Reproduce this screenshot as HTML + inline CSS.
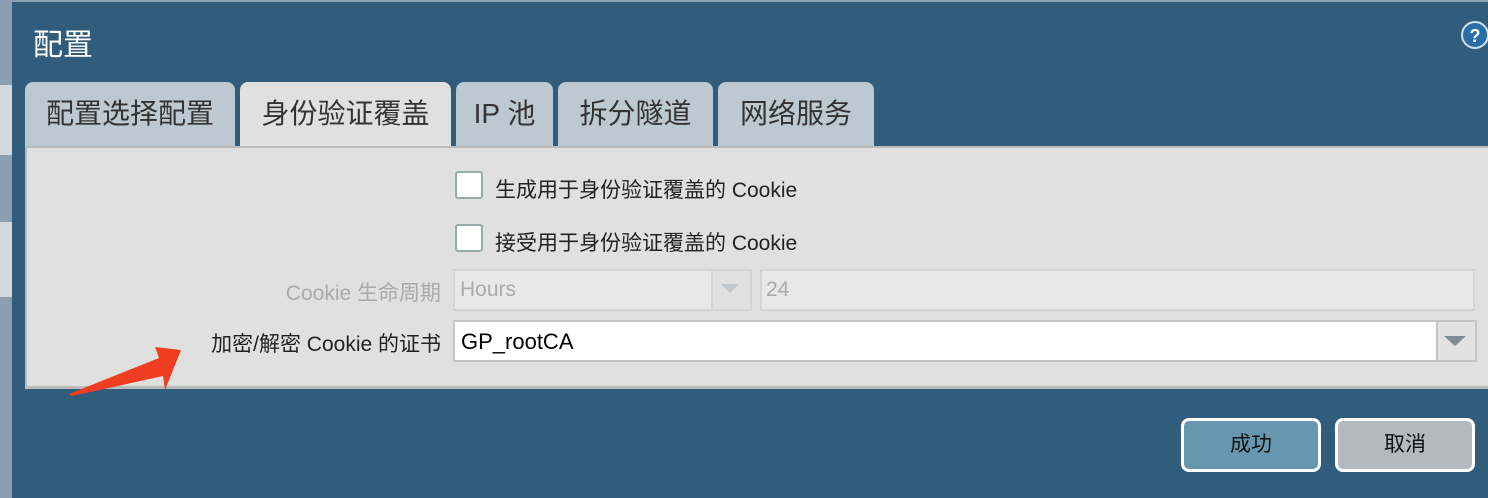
<!DOCTYPE html>
<html><head><meta charset="utf-8"><style>
body{margin:0;width:1488px;height:498px;overflow:hidden;background:#8aa0b0;font-family:"Liberation Sans","Noto Sans CJK SC",sans-serif;position:relative}
.dlg{position:absolute;left:12px;top:2px;width:1476px;height:496px;background:#325c7b}
.a{position:absolute}
.tab{position:absolute;top:82px;height:64px;background:#bcc9d0;border-radius:8px 8px 0 0;font-size:28px;color:#333;text-align:center;line-height:64px}
.panel{position:absolute;left:25px;top:146px;width:1463px;height:243px;background:#e0e0e0;border-left:2px solid #bbb;border-bottom:3px solid #bbb;border-top:2px solid #bbb;box-sizing:border-box}
.cb{position:absolute;width:24px;height:24px;background:#fff;border:2px solid #9aa;border-radius:3px}
.t{position:absolute;font-size:21px;color:#222;white-space:nowrap}
.btn{position:absolute;top:418px;width:134px;height:48px;border:3px solid #fff;border-radius:8px;font-size:21px;text-align:center;line-height:48px;color:#111}
</style></head><body>
<div class="a" style="left:0;top:85px;width:12px;height:70px;background:#d2d8dc"></div>
<div class="a" style="left:0;top:222px;width:12px;height:75px;background:#d2d8dc"></div>
<div class="dlg"></div>
<div class="t" style="left:33px;top:20px;font-size:30px;color:#fff">配置</div>
<svg class="a" style="left:1461px;top:20px" width="27" height="30"><circle cx="14" cy="15" r="13" fill="#2a6ea8" stroke="#cfe0ee" stroke-width="2"/><text x="14" y="22" font-size="18" font-weight="bold" fill="#fff" text-anchor="middle" font-family="Liberation Sans">?</text></svg>
<div class="tab" style="left:25px;width:210px">配置选择配置</div>
<div class="tab" style="left:240px;width:211px;background:#e0e0e0;height:66px">身份验证覆盖</div>
<div class="tab" style="left:456px;width:97px">IP 池</div>
<div class="tab" style="left:558px;width:155px">拆分隧道</div>
<div class="tab" style="left:718px;width:156px">网络服务</div>
<div class="panel"></div>
<div class="cb" style="left:455px;top:171px"></div>
<div class="t" style="left:495px;top:174px">生成用于身份验证覆盖的 Cookie</div>
<div class="cb" style="left:455px;top:224px"></div>
<div class="t" style="left:495px;top:227px">接受用于身份验证覆盖的 Cookie</div>
<div class="t" style="right:1047px;top:277px;color:#aaa">Cookie 生命周期</div>
<div class="a" style="left:453px;top:269px;width:295px;height:38px;background:#e8e8e8;border:2px solid #d4d4d4"></div>
<div class="a" style="left:711px;top:271px;width:37px;height:38px;background:#e0e0e0;border-left:2px solid #d4d4d4"></div>
<svg class="a" style="left:721px;top:284px" width="18" height="10"><path d="M0 0H18L9 9Z" fill="#c0c8cc"/></svg>
<div class="t" style="left:460px;top:278px;color:#aaa">Hours</div>
<div class="a" style="left:760px;top:269px;width:711px;height:38px;background:#e8e8e8;border:2px solid #d4d4d4"></div>
<div class="t" style="left:766px;top:278px;color:#aaa">24</div>
<div class="t" style="right:1047px;top:328px">加密/解密 Cookie 的证书</div>
<div class="a" style="left:453px;top:320px;width:1020px;height:38px;background:#fff;border:2px solid #c4c4c4"></div>
<div class="a" style="left:1436px;top:322px;width:37px;height:38px;background:#e2e2e2;border-left:2px solid #c4c4c4"></div>
<svg class="a" style="left:1444px;top:336px" width="22" height="11"><path d="M0 0H22L11 10Z" fill="#7d8d96"/></svg>
<div class="t" style="left:461px;top:329px;font-size:22px;color:#000">GP_rootCA</div>
<svg class="a" style="left:65px;top:338px" width="120" height="60"><path d="M4 56 L94 20 L90 9 L116 12 L100 52 L98 38 L7 58 Z" fill="#f03c20"/></svg>
<div class="btn" style="left:1181px;background:#6697ae">成功</div>
<div class="btn" style="left:1335px;background:#b4b8bf">取消</div>
</body></html>
